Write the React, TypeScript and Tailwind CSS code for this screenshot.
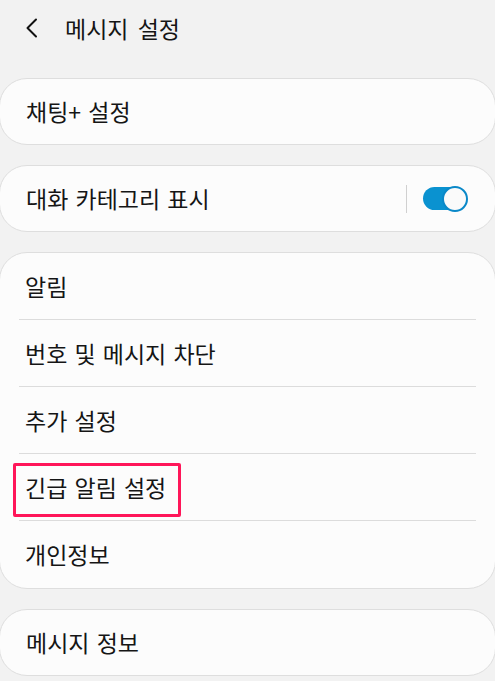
import React from "react";

function Toggle() {
  return (
    <div className="flex items-center">
      <div className="w-px h-[28px] bg-[#d0d0d0] mr-[16px]" />
      <div className="relative w-[45px] h-[26px] flex items-center">
        <div className="w-[42px] h-[23px] rounded-full bg-[#0a92d0]" />
        <div className="absolute right-0 top-0 w-[26px] h-[26px] rounded-full bg-[#fafafa] border-2 border-[#0a88c8]" />
      </div>
    </div>
  );
}

const label = "text-[23px] text-[#151515] leading-none [word-spacing:2px]";

function Row({ text, last, highlight }: { text: string; last?: boolean; highlight?: boolean }) {
  return (
    <div className="relative h-[67px] flex flex-col">
      <div className="flex-1 flex items-center px-[25px]">
        <span className={label}>{text}</span>
      </div>
      {highlight && (
        <div className="absolute left-[13px] top-[9px] w-[168px] h-[54px] border-[3px] border-[#ff1659] rounded-[2px]" />
      )}
      {!last && <div className="mx-[19px] h-px bg-[#dcdcdc]" />}
    </div>
  );
}

export default function App() {
  return (
    <div
      className="w-[495px] h-[681px] bg-[#f2f2f2] overflow-hidden"
      style={{ fontFamily: '"Noto Sans CJK KR", "Noto Sans", sans-serif' }}
    >
      <div className="h-[62px] flex items-center pl-[23px]">
        <svg width="20" height="20" viewBox="0 0 20 20" className="mb-[6px]">
          <path d="M13 1.5 L4.5 10 L13 18.5" fill="none" stroke="#111" strokeWidth="2" strokeLinecap="round" strokeLinejoin="round" />
        </svg>
        <span className="ml-[22px] mb-[6px] text-[23px] text-[#151515] leading-none [word-spacing:4px]">메시지 설정</span>
      </div>

      <div className="mt-[16px] mx-[-1px] flex flex-col gap-[20px]">
        <div className="bg-[#fcfcfc] rounded-[28px] border border-[#dedede]">
          <div className="h-[65px] flex items-center px-[26px]">
            <span className={label}>채팅+ 설정</span>
          </div>
        </div>

        <div className="bg-[#fcfcfc] rounded-[28px] border border-[#dedede]">
          <div className="h-[65px] flex items-center justify-between pl-[26px] pr-[27px]">
            <span className={label}>대화 카테고리 표시</span>
            <Toggle />
          </div>
        </div>

        <div className="bg-[#fcfcfc] rounded-[28px] border border-[#dedede]">
          <Row text="알림" />
          <Row text="번호 및 메시지 차단" />
          <Row text="추가 설정" />
          <Row text="긴급 알림 설정" highlight />
          <Row text="개인정보" last />
        </div>

        <div className="bg-[#fcfcfc] rounded-[28px] border border-[#dedede]">
          <div className="h-[65px] flex items-center px-[26px]">
            <span className={label}>메시지 정보</span>
          </div>
        </div>
      </div>
    </div>
  );
}
